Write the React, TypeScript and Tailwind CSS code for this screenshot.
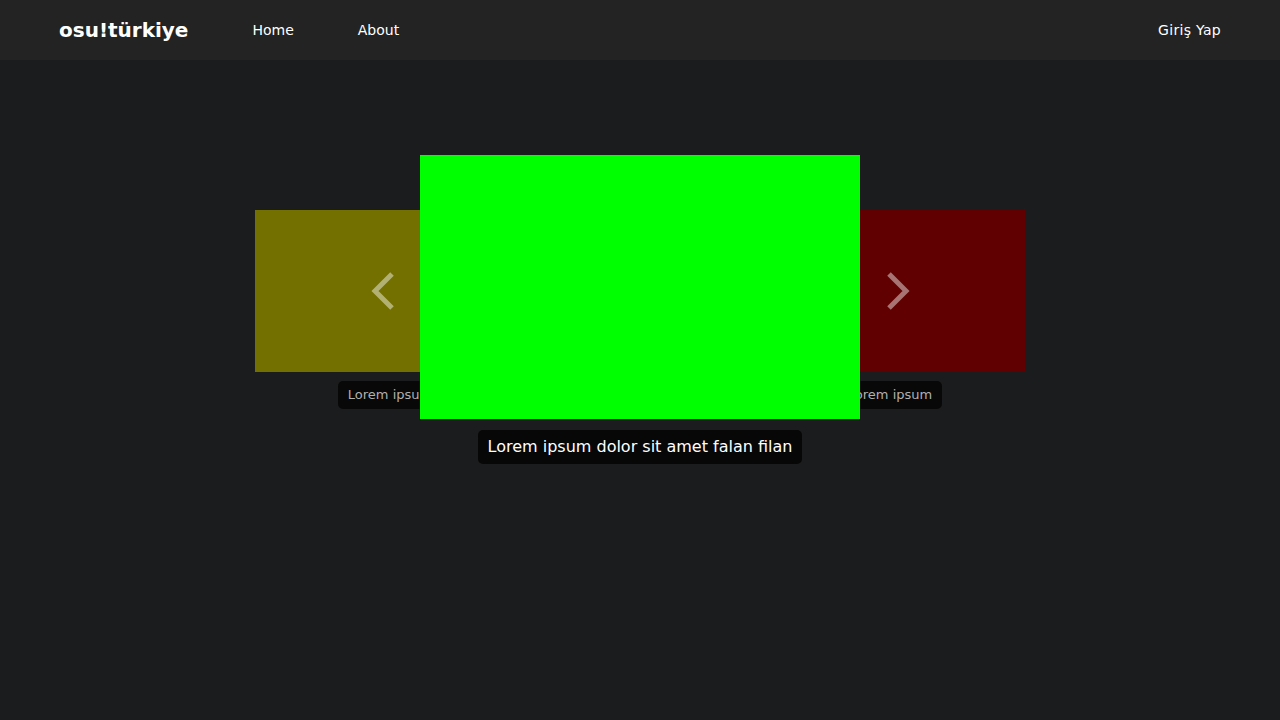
import React from "react";

const Chevron: React.FC<{ dir: "left" | "right" }> = ({ dir }) => (
  <svg width="26" height="40" viewBox="0 0 26 40" fill="none">
    <path
      d={dir === "left" ? "M21 3 L4 20 L21 37" : "M5 3 L22 20 L5 37"}
      stroke="white"
      strokeOpacity="0.45"
      strokeWidth="5"
    />
  </svg>
);

const SideCard: React.FC<{ color: string; dir: "left" | "right" }> = ({ color, dir }) => (
  <div className="flex w-[270px] flex-col items-center gap-[9px]">
    <div className={`relative flex h-[162px] w-full items-center justify-center ${color}`}>
      <button className={dir === "left" ? "mr-[12px]" : "ml-[14px]"}>
        <Chevron dir={dir} />
      </button>
    </div>
    <div className="rounded-[5px] bg-[#080808] px-[10px] py-[5px] text-[13px] leading-[18px] text-[#b0b0b0]">
      Lorem ipsum
    </div>
  </div>
);

const App: React.FC = () => {
  return (
    <div
      className="min-h-screen w-full bg-[#1b1c1e] text-white"
      style={{ fontFamily: '"DejaVu Sans", sans-serif' }}
    >
      {/* Navbar */}
      <nav className="flex h-[60px] items-center bg-[#232323] pl-[59px] pr-[59px]">
        <span className="text-[20px] font-bold">osu!türkiye</span>
        <div className="ml-[64px] flex gap-[64px] text-[14px]">
          <a>Home</a>
          <a>About</a>
        </div>
        <a className="ml-auto text-[14px] tracking-[0.3px]">Giriş Yap</a>
      </nav>

      {/* Carousel */}
      <div className="relative mx-auto mt-[95px] h-[320px] w-[770px]">
        <div className="absolute left-0 top-[55px]">
          <SideCard color="bg-[#737000]" dir="left" />
        </div>
        <div className="absolute right-0 top-[55px]">
          <SideCard color="bg-[#600000]" dir="right" />
        </div>
        {/* center */}
        <div className="absolute left-[165px] top-0 z-10 flex w-[440px] flex-col items-center gap-[11px]">
          <div className="h-[264px] w-full bg-[#00ff00]" />
          <div className="rounded-[5px] bg-[#070707] px-[10px] py-[7px] text-[16px] leading-[20px] text-white">
            Lorem ipsum dolor sit amet falan filan
          </div>
        </div>
      </div>
    </div>
  );
};

export default App;
